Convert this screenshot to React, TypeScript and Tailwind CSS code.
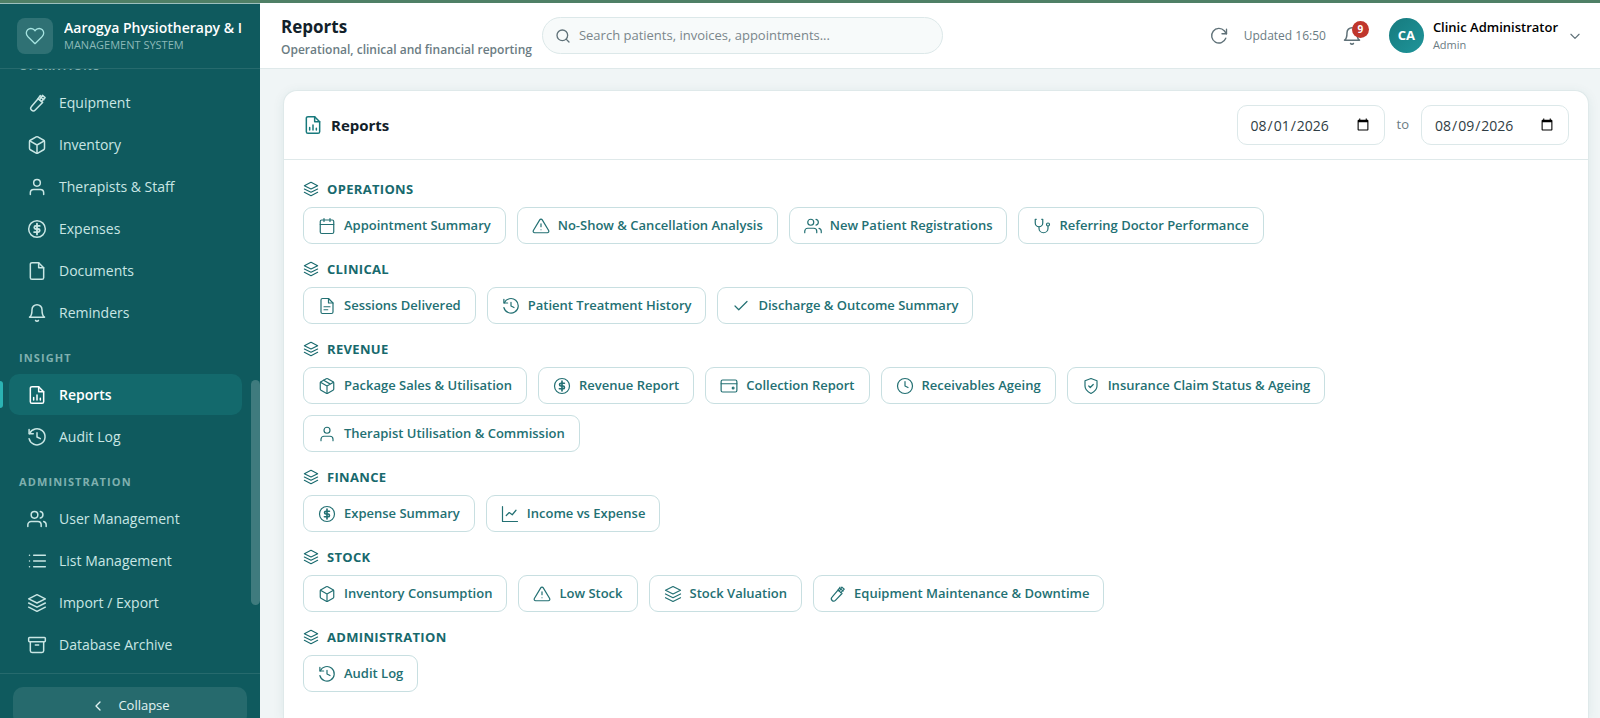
import type { ReactNode } from 'react'

const iconPaths: Record<string, ReactNode> = {
  heart: (
    <path d="M20.8 4.6a5.5 5.5 0 0 0-7.8 0L12 5.7l-1-1.1a5.5 5.5 0 0 0-7.8 7.8l1 1.1L12 21.2l7.8-7.7 1-1.1a5.5 5.5 0 0 0 0-7.8z" />
  ),
  tool: (
    <>
      <path d="M13.3 6.8 5.4 16.2a3.1 3.1 0 0 0 4.5 4.3l8.8-9.2z" />
      <path d="m15 8.3 3.5-5.5 3.2 2.8-4.6 4.6M16.2 4.8l4 3.2M13.3 6.8 16 3" />
    </>
  ),
  box: (
    <>
      <path d="M21 16V8a2 2 0 0 0-1-1.7l-7-4a2 2 0 0 0-2 0l-7 4A2 2 0 0 0 3 8v8a2 2 0 0 0 1 1.7l7 4a2 2 0 0 0 2 0l7-4a2 2 0 0 0 1-1.7z" />
      <path d="m3.3 7 8.7 5 8.7-5M12 22V12" />
    </>
  ),
  package: (
    <>
      <path d="M21 16V8a2 2 0 0 0-1-1.7l-7-4a2 2 0 0 0-2 0l-7 4A2 2 0 0 0 3 8v8a2 2 0 0 0 1 1.7l7 4a2 2 0 0 0 2 0l7-4a2 2 0 0 0 1-1.7z" />
      <path d="m3.3 7 8.7 5 8.7-5M12 22V12M7.5 4.3l9 5.2" />
    </>
  ),
  user: (
    <>
      <path d="M20 21v-2a4 4 0 0 0-4-4H8a4 4 0 0 0-4 4v2" />
      <circle cx="12" cy="7" r="4" />
    </>
  ),
  users: (
    <>
      <path d="M17 21v-2a4 4 0 0 0-4-4H5a4 4 0 0 0-4 4v2" />
      <circle cx="9" cy="7" r="4" />
      <path d="M23 21v-2a4 4 0 0 0-3-3.9M16 3.1a4 4 0 0 1 0 7.8" />
    </>
  ),
  dollar: (
    <>
      <circle cx="12" cy="12" r="10" />
      <path d="M12 5.5v13M15.2 8.3h-4.6a1.8 1.8 0 0 0 0 3.7h2.8a1.8 1.8 0 0 1 0 3.7H8.5" strokeWidth="2.2" />
    </>
  ),
  file: (
    <>
      <path d="M14 2H6a2 2 0 0 0-2 2v16a2 2 0 0 0 2 2h12a2 2 0 0 0 2-2V8z" />
      <path d="M14 2v6h6" />
    </>
  ),
  fileText: (
    <>
      <path d="M14 2H6a2 2 0 0 0-2 2v16a2 2 0 0 0 2 2h12a2 2 0 0 0 2-2V8z" />
      <path d="M14 2v6h6M8 13h8M8 17h5" />
    </>
  ),
  report: (
    <>
      <path d="M14 2H6a2 2 0 0 0-2 2v16a2 2 0 0 0 2 2h12a2 2 0 0 0 2-2V8z" />
      <path d="M14 2v6h6M8 18v-3M12 18v-6M16 18v-2" />
    </>
  ),
  bell: (
    <>
      <path d="M18 8A6 6 0 0 0 6 8c0 7-3 9-3 9h18s-3-2-3-9" />
      <path d="M13.7 21a2 2 0 0 1-3.4 0" />
    </>
  ),
  history: (
    <>
      <path d="M2.5 3v5h5" />
      <path d="M3 8a9.700 9.700 0 1 1-.5 6" />
      <path d="M12 7v5l4 2" />
    </>
  ),
  list: <path d="M8 5h14M8 12h14M8 19h14M3 5h.01M3 12h.01M3 19h.01" />,
  layers: (
    <>
      <path d="m12 2 10 5-10 5L2 7z" />
      <path d="m2 12 10 5 10-5M2 17l10 5 10-5" />
    </>
  ),
  archive: (
    <>
      <rect x="2" y="3" width="20" height="5" rx="1" />
      <path d="M4 8v11a2 2 0 0 0 2 2h12a2 2 0 0 0 2-2V8M10 12h4" />
    </>
  ),
  calendar: (
    <>
      <rect x="3" y="4" width="18" height="18" rx="2" />
      <path d="M16 2v4M8 2v4M3 10h18" />
    </>
  ),
  alert: (
    <>
      <path d="M10.3 3.9 1.8 18a2 2 0 0 0 1.7 3h17a2 2 0 0 0 1.7-3L13.7 3.9a2 2 0 0 0-3.4 0z" />
      <path d="M12 9v4M12 17h.01" />
    </>
  ),
  stethoscope: (
    <>
      <path d="M4.5 3H3v5a5 5 0 0 0 10 0V3h-1.5" />
      <path d="M8 13v2a6 6 0 0 0 12 0v-3" />
      <circle cx="20" cy="10" r="2" />
    </>
  ),
  check: <path d="M20 6 9 17l-5-5" />,
  wallet: (
    <>
      <rect x="1.5" y="4" width="21" height="16" rx="2" />
      <path d="M1.5 9h21" />
      <circle cx="17.5" cy="14.5" r="1.2" />
    </>
  ),
  clock: (
    <>
      <circle cx="12" cy="12" r="10" />
      <path d="M12 6v6l4 2" />
    </>
  ),
  shield: (
    <>
      <path d="M12 22s8-4 8-10V5l-8-3-8 3v7c0 6 8 10 8 10z" />
      <path d="m9 12 2 2 4-4" />
    </>
  ),
  chart: <path d="M2 2v20h20M7 14l4-4 4 3 5-6" />,
  refresh: (
    <>
      <path d="M22 3v6h-6" />
      <path d="M21 15a9.700 9.700 0 1 1-2-10L22 9" />
    </>
  ),
  search: (
    <>
      <circle cx="11" cy="11" r="8" />
      <path d="m21 21-4.3-4.3" />
    </>
  ),
  chevronDown: <path d="m5 9 7 7 7-7" />,
  chevronLeft: <path d="m15 18-6-6 6-6" />,
}

function Icon({ name, className, stroke = 1.8 }: { name: string; className: string; stroke?: number }) {
  return (
    <svg
      viewBox="0 0 24 24"
      fill="none"
      stroke="currentColor"
      strokeWidth={stroke}
      strokeLinecap="round"
      strokeLinejoin="round"
      aria-hidden="true"
      className={`shrink-0 ${className}`}
    >
      {iconPaths[name]}
    </svg>
  )
}

const navGroups = [
  {
    title: 'Operations',
    items: [
      { icon: 'tool', label: 'Equipment' },
      { icon: 'box', label: 'Inventory' },
      { icon: 'user', label: 'Therapists & Staff' },
      { icon: 'dollar', label: 'Expenses' },
      { icon: 'file', label: 'Documents' },
      { icon: 'bell', label: 'Reminders' },
    ],
  },
  {
    title: 'Insight',
    items: [
      { icon: 'report', label: 'Reports', active: true },
      { icon: 'history', label: 'Audit Log' },
    ],
  },
  {
    title: 'Administration',
    items: [
      { icon: 'users', label: 'User Management' },
      { icon: 'list', label: 'List Management' },
      { icon: 'layers', label: 'Import / Export' },
      { icon: 'archive', label: 'Database Archive' },
    ],
  },
]

const reportGroups = [
  {
    title: 'Operations',
    reports: [
      { icon: 'calendar', label: 'Appointment Summary' },
      { icon: 'alert', label: 'No-Show & Cancellation Analysis' },
      { icon: 'users', label: 'New Patient Registrations' },
      { icon: 'stethoscope', label: 'Referring Doctor Performance' },
    ],
  },
  {
    title: 'Clinical',
    reports: [
      { icon: 'fileText', label: 'Sessions Delivered' },
      { icon: 'history', label: 'Patient Treatment History' },
      { icon: 'check', label: 'Discharge & Outcome Summary' },
    ],
  },
  {
    title: 'Revenue',
    reports: [
      { icon: 'package', label: 'Package Sales & Utilisation' },
      { icon: 'dollar', label: 'Revenue Report' },
      { icon: 'wallet', label: 'Collection Report' },
      { icon: 'clock', label: 'Receivables Ageing' },
      { icon: 'shield', label: 'Insurance Claim Status & Ageing' },
      { icon: 'user', label: 'Therapist Utilisation & Commission' },
    ],
  },
  {
    title: 'Finance',
    reports: [
      { icon: 'dollar', label: 'Expense Summary' },
      { icon: 'chart', label: 'Income vs Expense' },
    ],
  },
  {
    title: 'Stock',
    reports: [
      { icon: 'box', label: 'Inventory Consumption' },
      { icon: 'alert', label: 'Low Stock' },
      { icon: 'layers', label: 'Stock Valuation' },
      { icon: 'tool', label: 'Equipment Maintenance & Downtime' },
    ],
  },
  {
    title: 'Administration',
    reports: [{ icon: 'history', label: 'Audit Log' }],
  },
]

function Sidebar() {
  return (
    <aside className="flex w-[260px] shrink-0 flex-col border-t border-[#9cc0bd] bg-[#0f5a5e] text-[#c9e6e4]">
      <div className="flex h-[65px] shrink-0 items-center gap-[11px] border-b border-[#266a6d] pr-2 pl-[17px]">
        <div className="flex size-9 shrink-0 items-center justify-center rounded-lg bg-[#2f7174] text-[#a5e3e0]">
          <Icon name="heart" className="size-5" stroke={1.6} />
        </div>
        <div className="min-w-0">
          <div className="overflow-hidden text-[14px] leading-[18px] font-semibold whitespace-nowrap text-white">
            Aarogya Physiotherapy &amp; I
          </div>
          <div className="text-[11px] leading-4 text-[#8cb9b8] uppercase">Management System</div>
        </div>
      </div>

      <div className="relative flex min-h-0 flex-1 flex-col">
        {/* scrolled to the lower groups */}
        <nav className="flex min-h-0 flex-1 flex-col justify-end overflow-hidden pr-[18px] pb-2 pl-[9px]">
          {navGroups.map((group) => (
            <div key={group.title} className="shrink-0">
              <h2 className="px-[10px] pt-[17px] pb-2 text-[11px] leading-4 font-bold tracking-widest text-[#7fb0af] uppercase">
                {group.title}
              </h2>
              <ul className="flex flex-col gap-px">
                {group.items.map((item) => (
                  <li key={item.label} className="relative">
                    {item.active && <span className="absolute top-[7px] -left-[9px] h-[27px] w-[3px] rounded-r bg-[#2bb3b3]" />}
                    <a
                      href="#"
                      className={`flex h-[41px] items-center gap-3 rounded-[10px] px-[18px] text-[14px] ${
                        item.active ? 'bg-[#13696c] font-semibold text-white' : ''
                      }`}
                    >
                      <Icon name={item.icon} className="size-5" />
                      {item.label}
                    </a>
                  </li>
                ))}
              </ul>
            </div>
          ))}
        </nav>
        <div className="absolute right-0 bottom-[68px] h-[225px] w-[9px] rounded-full bg-[#3f7b7e]" />
      </div>

      <div className="h-[45px] shrink-0 border-t border-[#266a6d] px-[13px] pt-[13px]">
        <button
          type="button"
          className="flex h-[38px] w-full items-center justify-center gap-3 rounded-[10px] bg-[#266a6d] text-[13px] text-[#e2f3f2]"
        >
          <Icon name="chevronLeft" className="size-4" stroke={2} />
          Collapse
        </button>
      </div>
    </aside>
  )
}

function Header() {
  return (
    <header className="flex h-[66px] shrink-0 items-center border-b border-[#dfe9ea] bg-white pr-[18px] pl-[21px]">
      <div className="pt-[5px]">
        <h1 className="text-[17px] leading-6 font-bold text-[#12212a]">Reports</h1>
        <p className="text-[12px] leading-[22px] font-semibold text-[#6b7c83]">Operational, clinical and financial reporting</p>
      </div>
      <label className="ml-[10px] flex h-[37px] w-[401px] items-center gap-2 rounded-full border border-[#dce8e9] bg-[#f7fafa] px-3">
        <Icon name="search" className="size-4 text-[#5f7178]" stroke={2} />
        <input
          type="search"
          aria-label="Search"
          placeholder="Search patients, invoices, appointments..."
          className="min-w-0 flex-1 bg-transparent text-[13px] outline-none placeholder:text-[#7a868b]"
        />
      </label>

      <div className="ml-auto flex items-center">
        <button type="button" aria-label="Refresh" className="text-[#5f7178]">
          <Icon name="refresh" className="size-[18px]" />
        </button>
        <span className="ml-4 text-[12px] text-[#6b7c83]">Updated 16:50</span>
        <button type="button" aria-label="Notifications" className="relative ml-4 text-[#5f7178]">
          <Icon name="bell" className="size-5" />
          <span className="absolute -top-[5px] -right-[7px] flex size-[17px] items-center justify-center rounded-full bg-[#c0362c] text-[10px] font-bold text-white">
            9
          </span>
        </button>
        <button type="button" className="ml-[27px] flex items-center text-left">
          <span className="flex size-[35px] items-center justify-center rounded-full bg-linear-to-br from-[#167a7e] to-[#1f959a] text-[13px] font-bold text-white">
            CA
          </span>
          <span className="ml-[9px]">
            <span className="block text-[13px] leading-[18px] font-semibold text-black">Clinic Administrator</span>
            <span className="block text-[11px] leading-[18px] text-[#6b7c83]">Admin</span>
          </span>
          <Icon name="chevronDown" className="ml-[10px] size-[14px] text-[#5f7178]" stroke={2} />
        </button>
      </div>
    </header>
  )
}

function DateField({ label, value }: { label: string; value: string }) {
  return (
    <input
      type="date"
      aria-label={label}
      defaultValue={value}
      className="h-10 w-[148px] rounded-[10px] border border-[#dce8e9] bg-white px-3 text-[14px] text-[#2f3d44]"
    />
  )
}

export default function App() {
  return (
    <div className="flex h-screen flex-col overflow-hidden border-t-[3px] border-[#4f8066] font-['Open_Sans','Noto_Sans',sans-serif]">
      <div className="flex min-h-0 flex-1">
        <Sidebar />
        <div className="flex min-w-0 flex-1 flex-col bg-[#f0f5f6]">
          <Header />
          <main className="flex min-h-0 flex-1 flex-col pt-[21px] pr-[11px] pl-[23px]">
            <section className="flex-1 rounded-t-[14px] border border-b-0 border-[#dfe9ea] bg-white shadow-[0_2px_12px_rgba(15,90,94,0.08)]">
              <div className="flex h-[69px] items-center justify-between border-b border-[#dfe9ea] px-[19px]">
                <h2 className="flex items-center gap-2 text-[15px] font-bold text-[#12212a]">
                  <Icon name="report" className="size-5 text-[#17797c]" />
                  Reports
                </h2>
                <div className="flex items-center gap-3 text-[13px] text-[#6b7c83]">
                  <DateField label="From date" value="2026-08-01" />
                  to
                  <DateField label="To date" value="2026-08-09" />
                </div>
              </div>

              <div className="flex flex-col gap-4 px-[19px] pt-5">
                {reportGroups.map((group) => (
                  <div key={group.title}>
                    <h3 className="flex items-center gap-2 text-[13px] leading-[18px] font-bold tracking-wide text-[#17696d] uppercase">
                      <Icon name="layers" className="size-4" stroke={1.6} />
                      {group.title}
                    </h3>
                    <div className="mt-[9px] flex flex-wrap gap-[11px] pr-[200px]">
                      {group.reports.map((report) => (
                        <button
                          key={report.label}
                          type="button"
                          className="flex h-[37px] items-center gap-2 rounded-[9px] border border-[#c8dfe1] bg-white px-[14px] text-[13px] font-semibold text-[#237073]"
                        >
                          <Icon name={report.icon} className="size-[18px]" stroke={1.6} />
                          {report.label}
                        </button>
                      ))}
                    </div>
                  </div>
                ))}
              </div>
            </section>
          </main>
        </div>
      </div>
    </div>
  )
}
